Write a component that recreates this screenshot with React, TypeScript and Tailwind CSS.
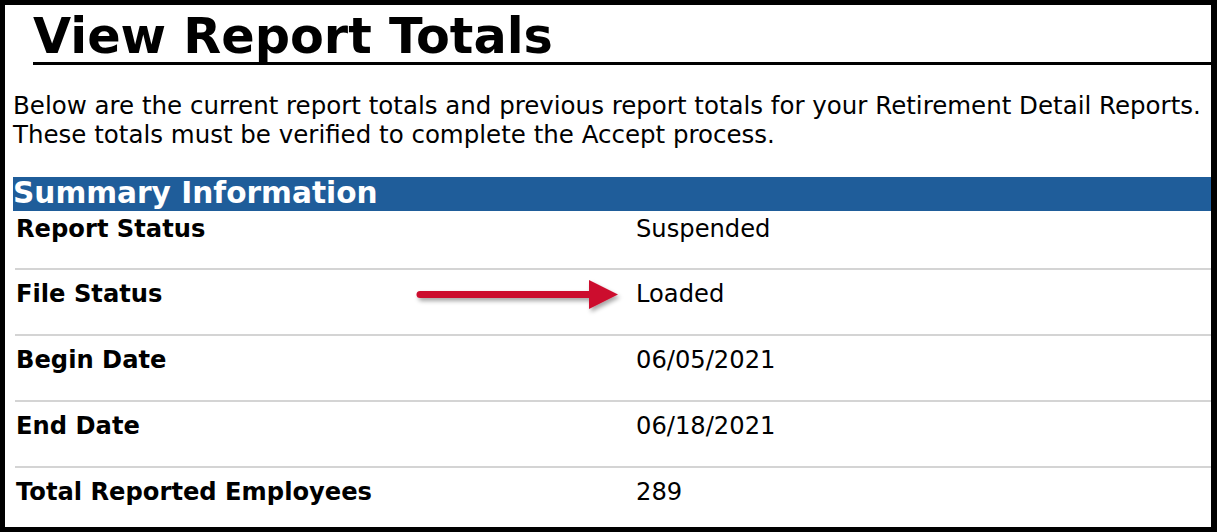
import React from "react";

const rows = [
  { label: "Report Status", value: "Suspended" },
  { label: "File Status", value: "Loaded" },
  { label: "Begin Date", value: "06/05/2021" },
  { label: "End Date", value: "06/18/2021" },
  { label: "Total Reported Employees", value: "289" },
];

const Arrow = () => (
  <svg
    className="absolute left-[400px] top-[5px]"
    width="215"
    height="42"
    viewBox="0 0 215 42"
  >
    <defs>
      <filter id="arrowShadow" x="-10%" y="-40%" width="120%" height="180%">
        <feDropShadow dx="2" dy="3" stdDeviation="2" floodColor="#000" floodOpacity="0.35" />
      </filter>
    </defs>
    <g filter="url(#arrowShadow)" fill="#cc0f2f" stroke="#cc0f2f">
      <line x1="7" y1="19.5" x2="180" y2="19.5" strokeWidth="7" strokeLinecap="round" />
      <polygon points="176,5 205,19.5 176,34" strokeWidth="0" />
    </g>
  </svg>
);

export default function App() {
  return (
    <div className="w-[1217px] h-[532px] overflow-hidden bg-white border-[5px] border-r-[6px] border-black font-['DejaVu_Sans',sans-serif] text-black">
      <h1 className="ml-[28px] mt-[6px] border-b-[3px] border-black text-[49.3px] font-bold leading-[51px]">
        View Report Totals
      </h1>
      <p className="ml-[8px] mt-[26px] text-[24.5px] leading-[29px]">
        Below are the current report totals and previous report totals for your Retirement Detail Reports.
        <br />
        These totals must be verified to complete the Accept process.
      </p>
      <div className="ml-[8px] mt-[28px]">
        <div className="h-[34px] bg-[#1f5d9a] text-white text-[29.6px] font-bold leading-[32px]">
          Summary Information
        </div>
        {rows.map((row, i) => (
          <div key={row.label}>
            {i > 0 && <div className="ml-[2px] h-[2px] bg-[#d4d4d4]" />}
            <div
              className={
                "relative flex text-[24.2px] leading-[29px] " +
                (i === 0 ? "pt-[4px] pb-[24px]" : "pt-[10px] pb-[25px]")
              }
            >
              <div className="w-[623px] pl-[3px] font-bold">{row.label}</div>
              <div>{row.value}</div>
              {row.label === "File Status" && <Arrow />}
            </div>
          </div>
        ))}
      </div>
    </div>
  );
}
